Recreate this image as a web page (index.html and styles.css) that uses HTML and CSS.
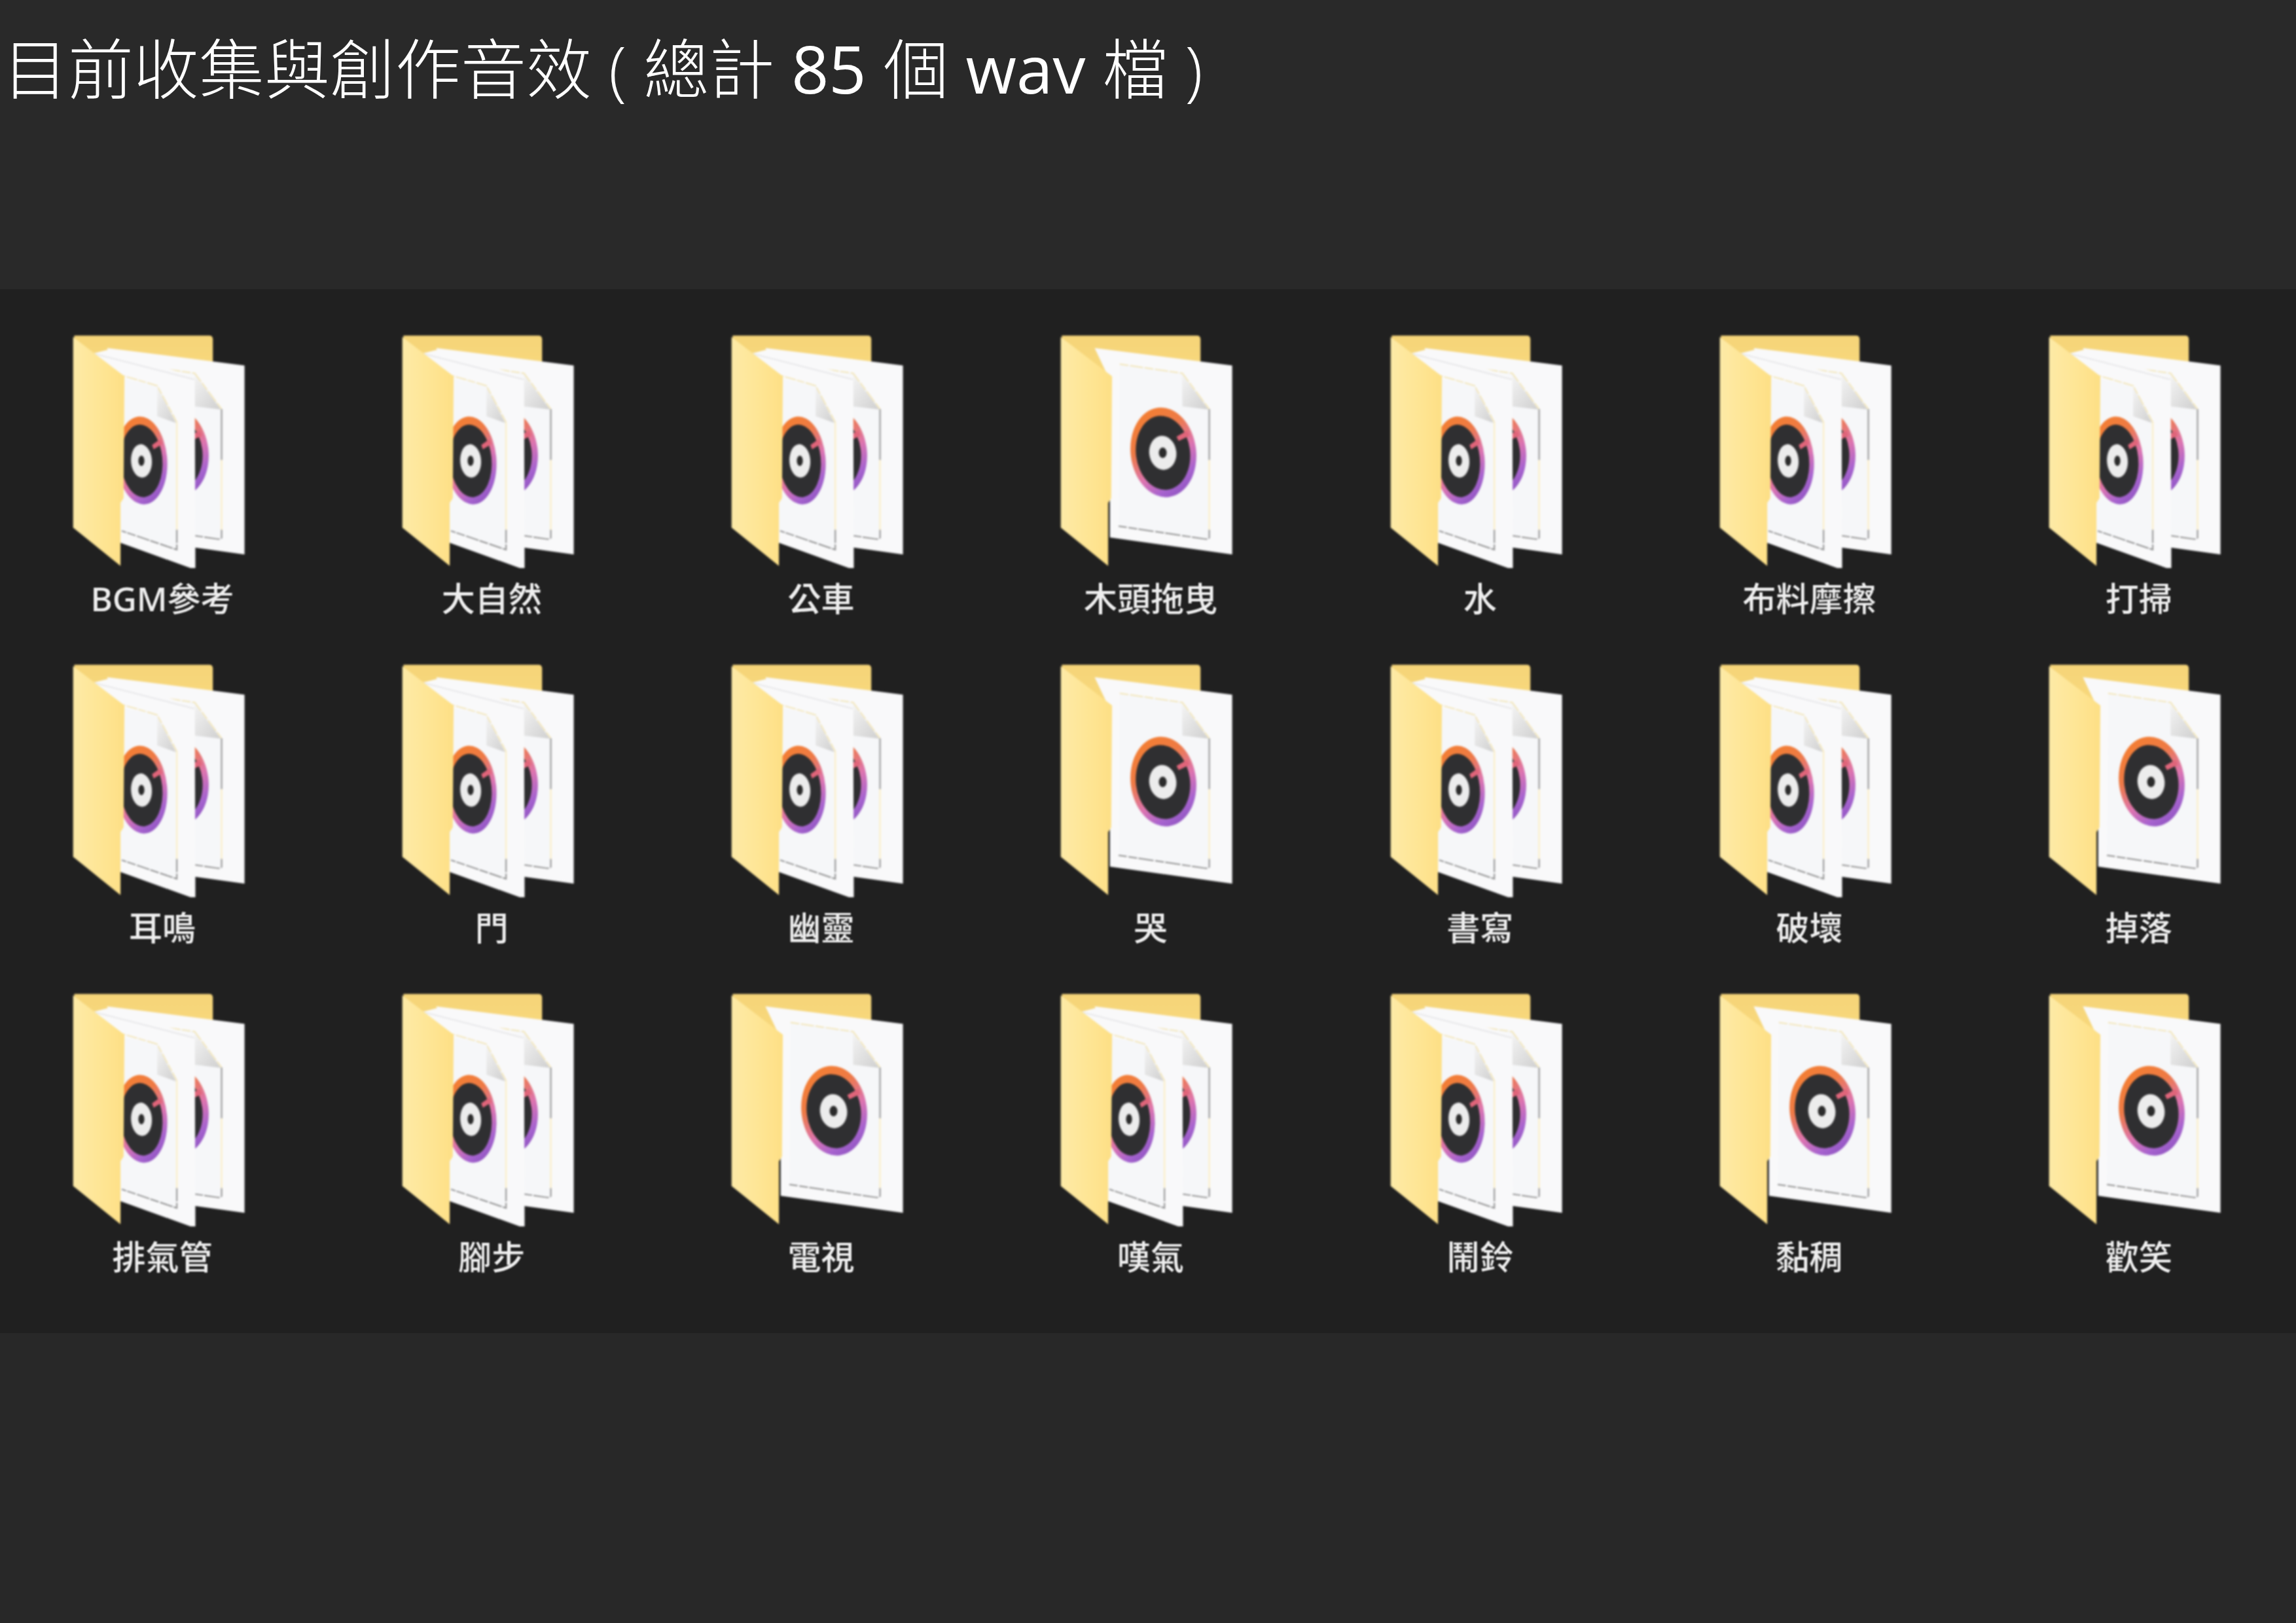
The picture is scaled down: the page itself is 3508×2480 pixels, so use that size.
FILE: index.html
```html
<!DOCTYPE html>
<html lang="zh-Hant">
<head>
<meta charset="utf-8">
<title>音效</title>
<link rel="stylesheet" href="styles.css">
</head>
<body>
<svg class="defs" aria-hidden="true">
  <defs>
    <linearGradient id="ring" x1="0.15" y1="0" x2="0.6" y2="1">
      <stop offset="0" stop-color="#f47f2e"/>
      <stop offset="0.36" stop-color="#ee7a45"/>
      <stop offset="0.66" stop-color="#dc74b0"/>
      <stop offset="0.88" stop-color="#a763cf"/>
      <stop offset="1" stop-color="#9558c4"/>
    </linearGradient>
    <linearGradient id="flap" x1="0" y1="0" x2="1" y2="0">
      <stop offset="0" stop-color="#fdeaa6"/>
      <stop offset="0.55" stop-color="#fee594"/>
      <stop offset="1" stop-color="#fddf85"/>
    </linearGradient>
    <linearGradient id="back" x1="0" y1="0" x2="0" y2="1">
      <stop offset="0" stop-color="#f5d478"/>
      <stop offset="1" stop-color="#fadc80"/>
    </linearGradient>
    <linearGradient id="fold" x1="0" y1="0" x2="1" y2="1">
      <stop offset="0" stop-color="#f4f4f4"/>
      <stop offset="1" stop-color="#cfcfcf"/>
    </linearGradient>
    <g id="disc">
      <ellipse cx="0" cy="0" rx="150" ry="206" fill="url(#ring)" transform="rotate(-7)"/>
      <ellipse cx="-2" cy="2" rx="124" ry="170" fill="#2f2f31" transform="rotate(-7)"/>
      <path d="M60 -72L110 -100L120 -76L70 -52Z" fill="#e0657a"/>
      <ellipse cx="-3" cy="2" rx="62" ry="78" fill="#ececec" transform="rotate(-7)"/>
      <ellipse cx="-3" cy="2" rx="18" ry="24" fill="#2b2b2b"/>
    </g>
    <path id="folderback" d="M100 95H718Q735 95 735 112V420H100Z" fill="url(#back)"/>
    <path id="flapshape" d="M95 102L330 282L326 840L312 862V1150L95 975Z" fill="url(#flap)"/>
    <g id="rearfile">
      <path d="M250 152L880 232V1098L320 1020V300Z" fill="#f9f9fa"/>
      <path d="M365 226L652 268L775 432V1028L360 966Z" fill="#f6f7f9"/>
      <use href="#disc" x="565" y="630"/>
      <path d="M650 272L652 420L772 434Z" fill="url(#fold)"/>
      <path d="M775 432V665" stroke="#a9a9a9" stroke-width="8" fill="none"/>
      <path d="M775 665V985" stroke="#fbefc8" stroke-width="7" fill="none"/>
      <path d="M775 985V1020Q774 1030 755 1027L360 968" stroke="#8f8f8f" stroke-width="6" stroke-dasharray="40 8 70 6" fill="none"/>
      <path d="M365 226L652 268L775 432" stroke="#f2e3ae" stroke-width="5" stroke-dasharray="40 8 60 7" fill="none"/>
    </g>
  </defs>
</svg>
<svg class="defs" aria-hidden="true">
  <defs>
    <g id="multi">
      <use href="#folderback"/>
      <use href="#rearfile"/>
      <path d="M185 178L256 160L652 285L655 1168L300 1040V300Z" fill="#f9f9fa"/>
      <path d="M190 178L650 296" stroke="#e6e6e8" stroke-width="6" fill="none"/>
      <path d="M250 278L480 325L570 492V1082L310 992V300Z" fill="#f6f7f9"/>
      <g transform="translate(410 667) scale(0.77 0.98)"><use href="#disc"/></g>
      <path d="M480 330L480 465L566 495Z" fill="url(#fold)"/>
      <path d="M570 492V985" stroke="#fbefc8" stroke-width="7" fill="none"/>
      <path d="M570 985V1076L318 990" stroke="#8f8f8f" stroke-width="6" stroke-dasharray="60 7 40 5" fill="none"/>
      <path d="M300 272L480 325L570 492" stroke="#f2e3ae" stroke-width="5" stroke-dasharray="35 7 50 6" fill="none"/>
      <use href="#flapshape"/>
    </g>
    <g id="single">
      <use href="#folderback"/>
      <use href="#rearfile"/>
      <use href="#flapshape"/>
    </g>
  </defs>
</svg>

<header class="title-bar">
  <h1 class="title">目前收集與創作音效 ( 總計 <span class="latin">85</span> 個 <span class="latin">wav</span> 檔 )</h1>
</header>

<main class="panel">
  <div class="cell"><svg class="icon" viewBox="90 90 800 1070"><use href="#multi"/></svg><span class="label">BGM參考</span></div>
  <div class="cell"><svg class="icon" viewBox="90 90 800 1070"><use href="#multi"/></svg><span class="label">大自然</span></div>
  <div class="cell"><svg class="icon" viewBox="90 90 800 1070"><use href="#multi"/></svg><span class="label">公車</span></div>
  <div class="cell"><svg class="icon" viewBox="90 90 800 1070"><use href="#single"/></svg><span class="label">木頭拖曳</span></div>
  <div class="cell"><svg class="icon" viewBox="90 90 800 1070"><use href="#multi"/></svg><span class="label">水</span></div>
  <div class="cell"><svg class="icon" viewBox="90 90 800 1070"><use href="#multi"/></svg><span class="label">布料摩擦</span></div>
  <div class="cell"><svg class="icon" viewBox="90 90 800 1070"><use href="#multi"/></svg><span class="label">打掃</span></div>

  <div class="cell"><svg class="icon" viewBox="90 90 800 1070"><use href="#multi"/></svg><span class="label">耳鳴</span></div>
  <div class="cell"><svg class="icon" viewBox="90 90 800 1070"><use href="#multi"/></svg><span class="label">門</span></div>
  <div class="cell"><svg class="icon" viewBox="90 90 800 1070"><use href="#multi"/></svg><span class="label">幽靈</span></div>
  <div class="cell"><svg class="icon" viewBox="90 90 800 1070"><use href="#single"/></svg><span class="label">哭</span></div>
  <div class="cell"><svg class="icon" viewBox="90 90 800 1070"><use href="#multi"/></svg><span class="label">書寫</span></div>
  <div class="cell"><svg class="icon" viewBox="90 90 800 1070"><use href="#multi"/></svg><span class="label">破壞</span></div>
  <div class="cell"><svg class="icon" viewBox="90 90 800 1070"><use href="#single"/></svg><span class="label">掉落</span></div>

  <div class="cell"><svg class="icon" viewBox="90 90 800 1070"><use href="#multi"/></svg><span class="label">排氣管</span></div>
  <div class="cell"><svg class="icon" viewBox="90 90 800 1070"><use href="#multi"/></svg><span class="label">腳步</span></div>
  <div class="cell"><svg class="icon" viewBox="90 90 800 1070"><use href="#single"/></svg><span class="label">電視</span></div>
  <div class="cell"><svg class="icon" viewBox="90 90 800 1070"><use href="#multi"/></svg><span class="label">嘆氣</span></div>
  <div class="cell"><svg class="icon" viewBox="90 90 800 1070"><use href="#multi"/></svg><span class="label">鬧鈴</span></div>
  <div class="cell"><svg class="icon" viewBox="90 90 800 1070"><use href="#single"/></svg><span class="label">黏稠</span></div>
  <div class="cell"><svg class="icon" viewBox="90 90 800 1070"><use href="#single"/></svg><span class="label">歡笑</span></div>
</main>
</body>
</html>
```

FILE: styles.css
```css
html, body {
  margin: 0;
  padding: 0;
  background: #282828;
}

body {
  min-height: 2480px;
  font-family: "Open Sans", "Noto Sans CJK TC", sans-serif;
  color: #fff;
}

.defs {
  display: block;
  width: 0;
  height: 0;
}

.title-bar {
  height: 442px;
  padding-left: 4px;
  box-sizing: border-box;
  background: #292929;
}

.title {
  margin: 0;
  padding-top: 34px;
  font-size: 100px;
  line-height: 140px;
  font-weight: 300;
  letter-spacing: 0;
  white-space: nowrap;
  font-family: "Open Sans", "Noto Sans CJK TC", sans-serif;
}

.latin {
  font-weight: 400;
}

.panel {
  display: grid;
  grid-template-columns: repeat(7, 456px);
  grid-auto-rows: 503px;
  column-gap: 47.3px;
  height: 1595px;
  box-sizing: border-box;
  padding: 69px 0 0 20px;
  background: #202020;
}

.cell {
  display: flex;
  flex-direction: column;
  align-items: center;
}

.icon {
  display: block;
  width: 267px;
  height: 357px;
  margin-right: 10px;
  filter: blur(1.4px);
}

.label {
  margin-top: 16px;
  font-size: 51px;
  line-height: 60px;
  font-weight: 500;
  color: #eeeeee;
  white-space: nowrap;
  font-family: "Noto Sans", "Noto Sans CJK TC", sans-serif;
  filter: blur(1px);
}
```
